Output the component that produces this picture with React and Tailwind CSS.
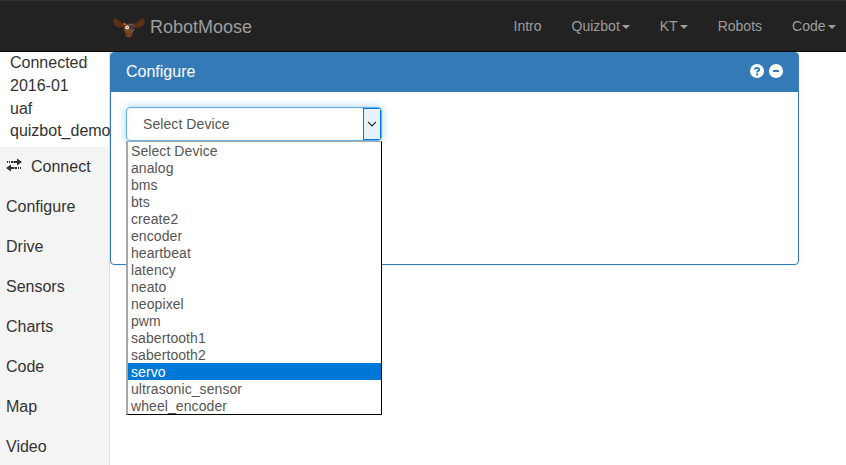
const devices = [
  'Select Device', 'analog', 'bms', 'bts', 'create2', 'encoder', 'heartbeat', 'latency',
  'neato', 'neopixel', 'pwm', 'sabertooth1', 'sabertooth2', 'servo', 'ultrasonic_sensor', 'wheel_encoder',
];

const links = [
  { label: 'Intro' },
  { label: 'Quizbot', menu: true },
  { label: 'KT', menu: true },
  { label: 'Robots' },
  { label: 'Code', menu: true },
];

const tabs = ['Configure', 'Drive', 'Sensors', 'Charts', 'Code', 'Map', 'Video'];

function Caret() {
  return (
    <svg className="mt-px ml-[2px] h-1 w-2" viewBox="0 0 8 4">
      <path d="M0 0h8L4 4z" fill="currentColor" />
    </svg>
  );
}

function MooseLogo() {
  return (
    <svg className="mt-[3px] h-[20px] w-[32px]" viewBox="0 0 32 20">
      <path d="M12 9.500C8 10 3 9.500 1 6.500-.5 4 .2.600 2.500.4 4.800.3 5.500 2.500 7.200 3.800 9 5 10.500 5.200 12 6z" fill="#5b3017" />
      <path d="M20 9.500c4 .5 9 0 11-3C32.500 4 31.800.600 29.500.4c-2.300-.1-3 2.100-4.700 3.400C23 5 21.500 5.200 20 6z" fill="#5b3017" />
      <path d="M11 8c.5-3.500 9.500-3.500 10 0v4.500l-1.500 2.500c.5 2.500-.8 4.600-3.500 4.600s-4-2.100-3.500-4.600L11 12.500z" fill="#7a4420" />
      <path d="M17 5.500l3 .6 1.300 2.400V12l-1.800 1.500L17 12z" fill="#59636a" />
      <path d="M10.500 7l.3-2.500 2.700 1.700z" fill="#c07a50" />
      <circle cx="14.200" cy="9.500" r="2" fill="#eee0d5" />
      <circle cx="14.600" cy="9.500" r=".5" fill="#514039" />
      <circle cx="18.800" cy="9.500" r="2" fill="#171719" />
      <circle cx="18.800" cy="9.500" r="1.100" fill="#e52b2b" />
      <path d="M14 16.500h1.200M17 16.500h1.200" stroke="#3f2010" />
    </svg>
  );
}

function TransferIcon() {
  return (
    <svg className="-mt-[4px] h-[14px] w-[16px]" viewBox="0 0 16 14" fill="#333">
      <path d="M1 3h1v2H1zM3 3h1v2H3zM5 3h2v2H5zM7.500 3H11V.5L16 4l-5 3.500V5H7.500zM15 9h-1v2h1zM13 9h-1v2h1zM11 9H9v2h2zM8.500 9H5V6.500L0 10l5 3.500V11h3.500z" />
    </svg>
  );
}

export default function App() {
  return (
    <div className="flex h-[465px] w-[846px] flex-col overflow-hidden bg-white font-['Liberation_Sans',Arial,sans-serif] text-[#333]">
      <header className="flex h-[52px] shrink-0 items-center border-t border-b border-t-[#303030] border-b-[#080808] bg-[#222] pl-[113px] text-[#9d9d9d]">
        <MooseLogo />
        <span className="ml-[5px] pt-px text-[18px] leading-5">RobotMoose</span>
        <nav className="ml-auto flex gap-[30px] pr-[10.500px] text-sm">
          {links.map((l) => (
            <a key={l.label} className="flex items-center">
              {l.label}
              {l.menu && <Caret />}
            </a>
          ))}
        </nav>
      </header>
      <div className="flex min-h-0 flex-1">
        <aside className="flex w-[110px] shrink-0 flex-col border-r border-[#ddd] text-base">
          <div className="h-[95px] shrink-0 pl-[10px] leading-[22.800px]">
            <div>Connected</div>
            <div>2016-01</div>
            <div>uaf</div>
            <div>quizbot_demo</div>
          </div>
          <div className="flex-1 bg-[#f4f4f4] pl-[6px]">
            <div className="flex h-10 items-center gap-[9px]">
              <TransferIcon />
              <span className="-mt-px">Connect</span>
            </div>
            {tabs.map((t) => (
              <div key={t} className="flex h-10 items-center">{t}</div>
            ))}
          </div>
        </aside>
        <main className="h-[213px] w-[689px] rounded border border-[#337ab7] shadow-[0_1px_1px_rgba(0,0,0,0.05)]">
          <div className="flex h-[39px] items-center bg-[#337ab7] pr-[15px] pl-[15px] text-base text-white">
            <span className="-mt-[2px]">Configure</span>
            <div className="-mt-[3px] ml-auto flex gap-[5px]">
              <svg className="size-[14px]" viewBox="0 0 14 14">
                <circle cx="7" cy="7" r="7" fill="white" />
                <path d="M4.800 5.600C4.800 3.500 9.200 3.300 9.200 5.500c0 1.500-2.100 1.300-2.100 3M7.100 9.500v2" fill="none" stroke="#337ab7" strokeWidth="1.900" />
              </svg>
              <svg className="size-[14px]" viewBox="0 0 14 14">
                <circle cx="7" cy="7" r="7" fill="white" />
                <path d="M4 6h6v2H4z" fill="#337ab7" />
              </svg>
            </div>
          </div>
          <div className="relative mt-[15px] ml-[15px] w-[256px] text-sm tracking-[0.08px] text-[#555]">
            <div className="flex h-[34px] items-stretch overflow-hidden rounded border border-[#66afe9] bg-white pl-4 shadow-[inset_0_1px_1px_rgba(0,0,0,0.075),0_0_8px_rgba(102,175,233,0.6)]">
              <span className="self-center">Select Device</span>
              <div className="ml-auto flex w-[18px] items-center justify-center border border-[#0078d7] bg-[#e5f1fb]">
                <svg className="h-[6px] w-[10px]" viewBox="0 0 10 6">
                  <path d="M1 .8l4 4 4-4" fill="none" stroke="#222" strokeWidth="1.200" />
                </svg>
              </div>
            </div>
            <div className="absolute top-[34px] left-0 w-[256px] border-t border-r border-b border-l-2 border-t-[#a9a9a9] border-r-black border-b-black border-l-[#a9a9a9] bg-white">
              {devices.map((d) => (
                <div key={d} className={d === 'servo' ? 'h-[17px] bg-[#0078d7] pl-[3px] leading-[19px] text-white' : 'h-[17px] pl-[3px] leading-[19px]'}>
                  {d}
                </div>
              ))}
            </div>
          </div>
        </main>
      </div>
    </div>
  );
}
